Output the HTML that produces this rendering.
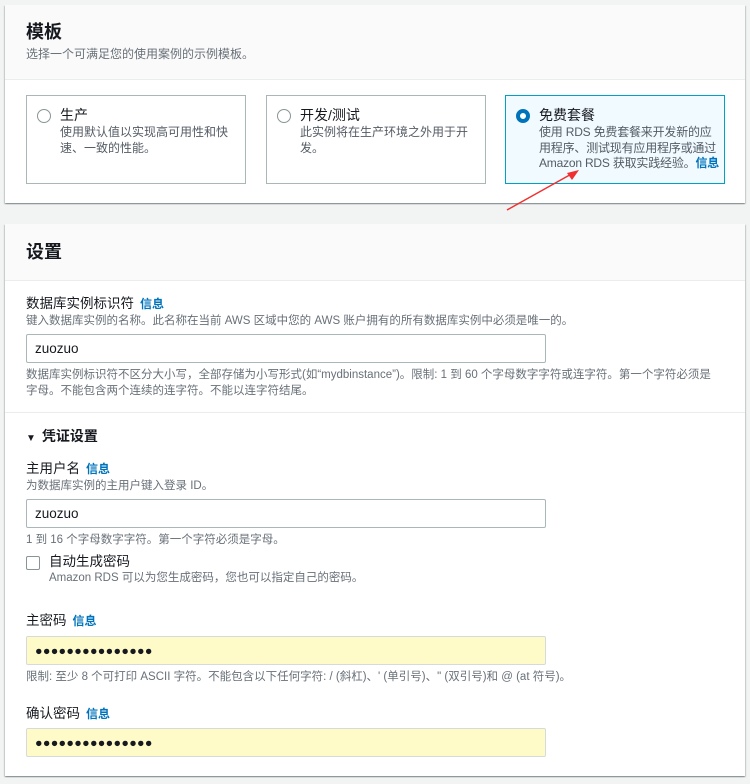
<!DOCTYPE html>
<html><head><meta charset="utf-8"><style>
*{margin:0;padding:0;box-sizing:border-box}
body{width:750px;height:784px;background:#f2f3f3;font-family:"Liberation Sans","Noto Sans CJK SC",sans-serif;color:#16191f;position:relative;overflow:hidden}
.a{position:absolute;white-space:nowrap}
.panel{position:absolute;left:5px;width:740px;background:#fff;box-shadow:0 1px 1px 0 rgba(0,28,36,.3),1px 1px 1px 0 rgba(0,28,36,.15),-1px 1px 1px 0 rgba(0,28,36,.15)}
.hd{position:absolute;left:0;top:0;width:740px;background:#fafafa;border-bottom:1px solid #eaeded}
.card{position:absolute;top:95px;width:220px;height:89px;border:1px solid #aab7b8;background:#fff}
.card.sel{border-color:#00a1c9;background:#f1faff}
.radio{position:absolute;left:10px;top:13px;width:14px;height:14px;border:1px solid #879596;border-radius:50%;background:#fff}
.sel .radio{border:4px solid #0073bb}
.ct{position:absolute;left:33px;top:10px;font-size:14px;line-height:18px;white-space:nowrap}
.cd{position:absolute;left:33px;top:29px;font-size:12px;line-height:15.5px;color:#545b64;white-space:nowrap}
.lbl{font-size:13.5px;line-height:18px}
.info{color:#0073bb;font-weight:bold;font-size:12px;margin-left:6px}
.desc{font-size:11.5px;color:#687078;line-height:15px}
.inp{position:absolute;left:26px;width:520px;height:29px;border:1px solid #aab7b8;border-radius:2px;background:#fff;font-size:13.5px;padding:6px 8px;line-height:16px}
.yel{background:#fffbc8;border-color:#d5dbdb;font-size:12.5px;letter-spacing:0.3px}
</style></head><body>
<div class="panel" style="top:5px;height:198px">
 <div class="hd" style="height:75px"></div>
</div>
<div class="a" style="left:26px;top:20px;font-size:18px;font-weight:bold;line-height:24px">模板</div>
<div class="a desc" style="left:26px;top:47px;font-size:12px">选择一个可满足您的使用案例的示例模板。</div>
<div class="card" style="left:26px"><div class="radio"></div><div class="ct">生产</div><div class="cd">使用默认值以实现高可用性和快<br>速、一致的性能。</div></div>
<div class="card" style="left:266px"><div class="radio"></div><div class="ct">开发/测试</div><div class="cd">此实例将在生产环境之外用于开<br>发。</div></div>
<div class="card sel" style="left:505px"><div class="radio"></div><div class="ct">免费套餐</div><div class="cd" style="letter-spacing:-0.2px">使用 RDS 免费套餐来开发新的应<br>用程序、测试现有应用程序或通过<br>Amazon RDS 获取实践经验。<b style="color:#0073bb">信息</b></div></div>
<svg class="a" style="left:505px;top:168px" width="80" height="45"><line x1="2" y1="42" x2="70" y2="4" stroke="#f03030" stroke-width="1.5"/><path d="M74 2 L62 5 L67 12 Z" fill="#f03030"/></svg>

<div class="panel" style="top:224px;height:552px">
 <div class="hd" style="height:57px"></div>
 <div style="position:absolute;left:0;top:188px;width:740px;border-top:1px solid #eaeded"></div>
</div>
<div class="a" style="left:26px;top:240px;font-size:18px;font-weight:bold;line-height:24px">设置</div>
<div class="a lbl" style="left:26px;top:295px">数据库实例标识符<span class="info">信息</span></div>
<div class="a desc" style="left:26px;top:314px">键入数据库实例的名称。此名称在当前 AWS 区域中您的 AWS 账户拥有的所有数据库实例中必须是唯一的。</div>
<div class="inp" style="top:334px">zuozuo</div>
<div class="a desc" style="left:26px;top:368px;line-height:15.5px">数据库实例标识符不区分大小写，全部存储为小写形式(如“mydbinstance”)。限制: 1 到 60 个字母数字字符或连字符。第一个字符必须是<br>字母。不能包含两个连续的连字符。不能以连字符结尾。</div>
<div class="a" style="left:26px;top:427px;font-size:14px;font-weight:bold;line-height:18px"><span style="font-size:10px;margin-right:6px">▼</span>凭证设置</div>
<div class="a lbl" style="left:26px;top:460px">主用户名<span class="info">信息</span></div>
<div class="a desc" style="left:26px;top:479px">为数据库实例的主用户键入登录 ID。</div>
<div class="inp" style="top:499px">zuozuo</div>
<div class="a desc" style="left:26px;top:533px">1 到 16 个字母数字字符。第一个字符必须是字母。</div>
<div class="a" style="left:26px;top:556px;width:14px;height:14px;border:1px solid #879596;border-radius:2px;background:#fff"></div>
<div class="a lbl" style="left:49px;top:553px">自动生成密码</div>
<div class="a desc" style="left:49px;top:571px">Amazon RDS 可以为您生成密码，您也可以指定自己的密码。</div>
<div class="a lbl" style="left:26px;top:612px">主密码<span class="info">信息</span></div>
<div class="inp yel" style="top:636px">●●●●●●●●●●●●●●●</div>
<div class="a desc" style="left:26px;top:670px">限制: 至少 8 个可打印 ASCII 字符。不能包含以下任何字符: / (斜杠)、' (单引号)、" (双引号)和 @ (at 符号)。</div>
<div class="a lbl" style="left:26px;top:705px">确认密码<span class="info">信息</span></div>
<div class="inp yel" style="top:728px">●●●●●●●●●●●●●●●</div>
</body></html>
